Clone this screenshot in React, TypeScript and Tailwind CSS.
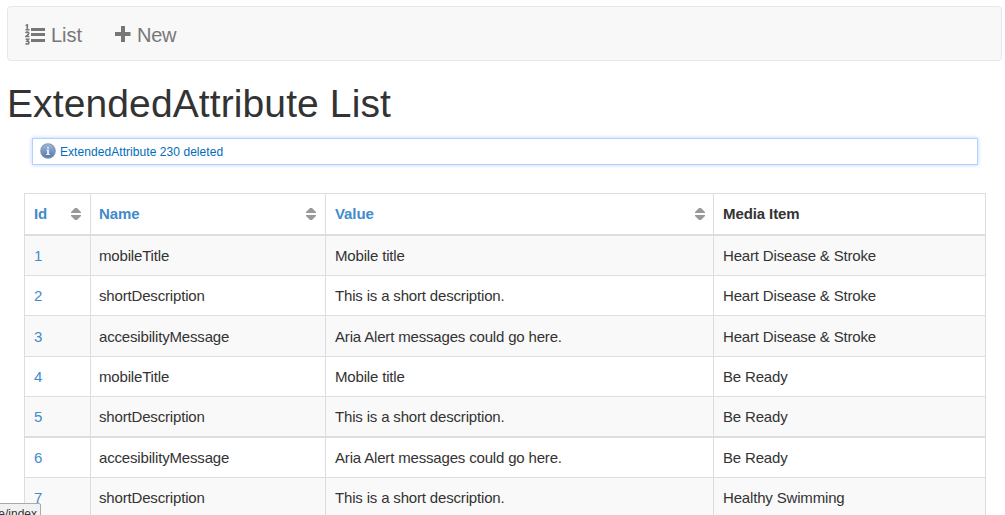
import React from "react";

type Row = { id: number; name: string; value: string; media: string; height: string };

const rows: Row[] = [
  { id: 1, name: "mobileTitle", value: "Mobile title", media: "Heart Disease & Stroke", height: "h-10 border-b" },
  { id: 2, name: "shortDescription", value: "This is a short description.", media: "Heart Disease & Stroke", height: "h-10 border-b" },
  { id: 3, name: "accesibilityMessage", value: "Aria Alert messages could go here.", media: "Heart Disease & Stroke", height: "h-[41px] border-b" },
  { id: 4, name: "mobileTitle", value: "Mobile title", media: "Be Ready", height: "h-10 border-b" },
  { id: 5, name: "shortDescription", value: "This is a short description.", media: "Be Ready", height: "h-[41px] border-b-2" },
  { id: 6, name: "accesibilityMessage", value: "Aria Alert messages could go here.", media: "Be Ready", height: "h-10 border-b" },
  { id: 7, name: "shortDescription", value: "This is a short description.", media: "Healthy Swimming", height: "h-10 border-b" },
];

const columns = "grid grid-cols-[66px_235px_388px_271px]";

function SortIcon() {
  return (
    <svg width="10" height="12" viewBox="0 0 10 12" fill="#999" className="mb-px">
      <path d="M4 0h2l4 4v1H0V4z" />
      <path d="M0 7h10v1l-4 4H4L0 8z" />
    </svg>
  );
}

function HeaderCell({ label, padding }: { label: string; padding: string }) {
  return (
    <div className={`flex items-center justify-between border-r border-[#ddd] text-[#428bca] ${padding}`}>
      <a>{label}</a>
      <SortIcon />
    </div>
  );
}

function ListIcon() {
  return (
    <svg width="21" height="22" viewBox="0 0 21 22" className="relative top-px shrink-0">
      <path d="M6 4h14v3H6zM6 9h14v3H6zM6 15h14v3H6z" fill="#777" />
      <g fill="none" stroke="#777" strokeWidth="1.6">
        <path d="M.6 1.600l1.700-.6V5.600M.5 5.700h4" />
        <path d="M.6 9c.6-1.300 3.200-1.200 3.200.3 0 1-1.500 1.900-2.900 3.200h3.400" />
        <path d="M.6 15.200h3l-1.500 1.900c2.500 0 2.500 2.900.1 2.900-.7 0-1.200-.2-1.700-.5" />
      </g>
    </svg>
  );
}

function InfoIcon() {
  return (
    <svg width="16" height="16" viewBox="0 0 16 16" className="relative -top-px shrink-0">
      <defs>
        <linearGradient id="info" x1="0" y1="0" x2="0" y2="1">
          <stop offset="0" stopColor="#9cb7d9" />
          <stop offset="1" stopColor="#5378ae" />
        </linearGradient>
      </defs>
      <circle cx="8" cy="8" r="7.800" fill="#8497b3" />
      <circle cx="8" cy="8" r="6.700" fill="url(#info)" />
      <path d="M7 4h2v1.500H7zM6.500 6.500H9V11h1v1H6v-1h1V7.500h-.5z" fill="#dfe9f5" />
    </svg>
  );
}

export default function App() {
  return (
    <div className="relative h-[515px] w-[1005px] overflow-hidden bg-white pt-1.5 font-['Liberation_Sans',Arial,sans-serif] text-[15px] text-[#333]">
      <nav className="ml-[7px] flex h-[55px] w-[995px] items-center rounded-[4px] border border-[#e7e7e7] bg-[#f8f8f8] pl-[17px] text-[20px] text-[#777]">
        <a className="flex w-[89px] items-center gap-[5px]">
          <ListIcon />
          <span className="relative top-px">List</span>
        </a>
        <a className="flex items-center gap-[6px]">
          <svg width="17" height="17" viewBox="0 0 17 17" fill="#777" className="relative top-px">
            <path d="M7 0h4v6h5.500v4H11v6H7v-6H1V6h6z" />
          </svg>
          <span className="relative top-px tracking-[-0.3px]">New</span>
        </a>
      </nav>
      <h1 className="ml-[7px] mt-[21px] h-[56px] whitespace-nowrap text-[39px] leading-[44px] tracking-[0.11px]">ExtendedAttribute List</h1>
      <div className="ml-8 flex h-[27px] w-[946px] items-center gap-1 border border-[#b2d1ff] pl-[7px] text-[12px] tracking-[0.06px] text-[#006dba] shadow-[0_0_4px_#b2d1ff]">
        <InfoIcon />
        <span>ExtendedAttribute 230 deleted</span>
      </div>
      <main className="ml-6 mt-7 w-[962px] border border-[#ddd] tracking-[-0.17px]">
        <div className={`${columns} h-[42px] border-b-2 border-[#ddd] font-bold tracking-[-0.1px]`}>
          <HeaderCell label="Id" padding="pl-[9px] pr-[9px]" />
          <HeaderCell label="Name" padding="pl-2 pr-[9px]" />
          <HeaderCell label="Value" padding="pl-[9px] pr-2" />
          <div className="flex items-center pl-[9px]">Media Item</div>
        </div>
        {rows.map((row) => (
          <div key={row.id} className={`${columns} ${row.height} border-[#ddd] ${row.id % 2 ? "bg-[#f9f9f9]" : "bg-white"}`}>
            <div className="flex items-center border-r border-[#ddd] pl-[9px] pt-0.5 text-[#428bca]"><a>{row.id}</a></div>
            <div className="flex items-center border-r border-[#ddd] pl-[8px] pt-0.5">{row.name}</div>
            <div className="flex items-center border-r border-[#ddd] pl-[9px] pt-0.5">{row.value}</div>
            <div className="flex items-center pl-[9px] pt-0.5">{row.media}</div>
          </div>
        ))}
      </main>
      <div className="absolute -left-px top-[503px] flex h-5 w-[42px] justify-end rounded-tr-[2px] border border-[#aaa] bg-[#f1f1f1] pr-[3px] text-[12px] leading-[20px] text-[#333]">
        <span className="whitespace-nowrap">e/index</span>
      </div>
    </div>
  );
}
